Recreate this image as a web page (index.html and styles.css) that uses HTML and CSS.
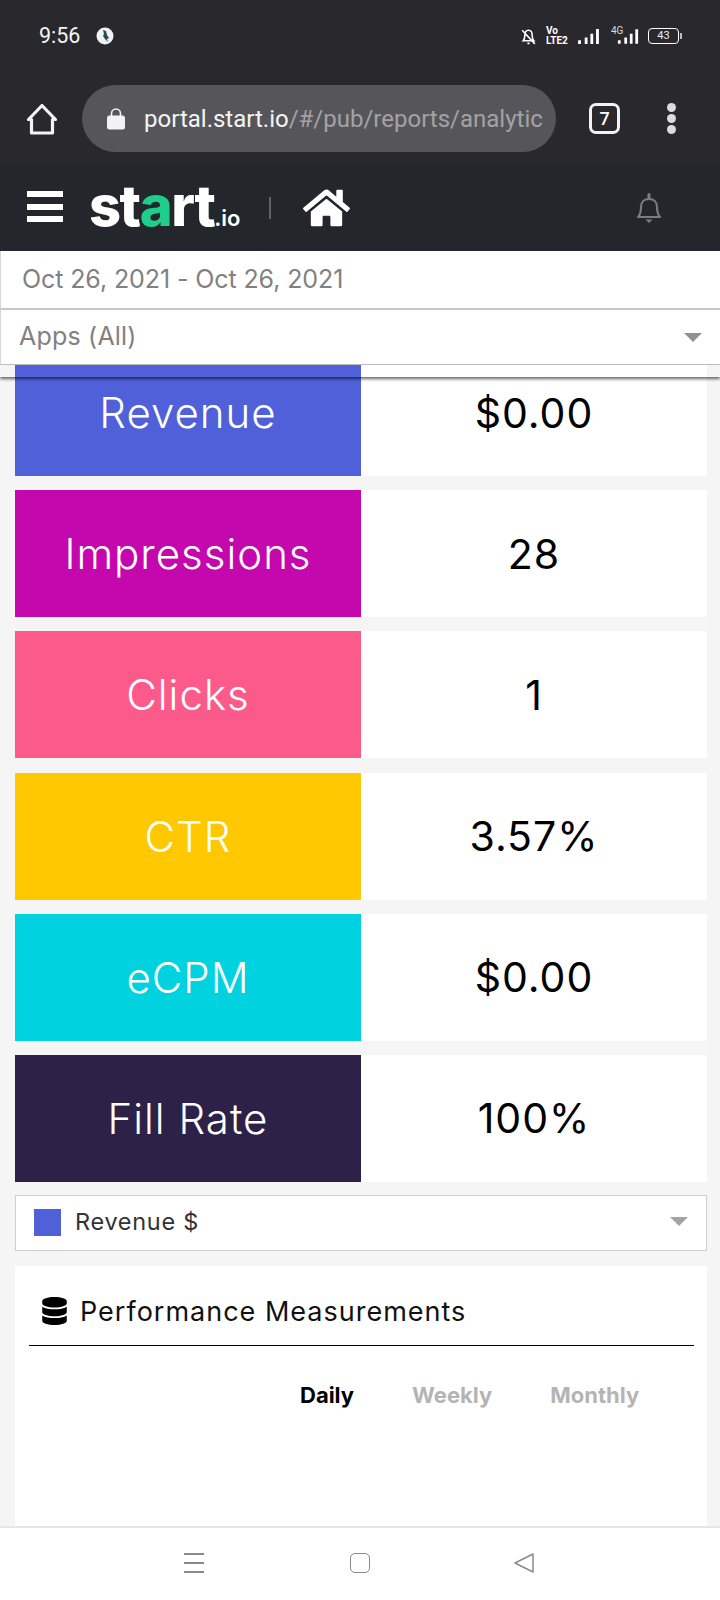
FILE: index.html
```html
<!DOCTYPE html>
<html lang="en">
<head>
<meta charset="utf-8">
<title>start.io analytics</title>
<link rel="stylesheet" href="styles.css">
</head>
<body>
<div class="screen">
  <div class="chrome">
    <div class="status">
      <div class="status-left">
        <span class="time">9:56</span>
        <svg class="globe" viewBox="0 0 18 18"><circle cx="9" cy="9" r="8.5" fill="#f2f2f2"/><path d="M7 3l3 1 1 4 2 3-2 1 1 3-3-3-2-3 1-2z" fill="#274a5c"/></svg>
      </div>
      <div class="status-right">
        <svg class="mute" viewBox="0 0 16 18"><path d="M3 13c1-1 1.500-2 1.500-5S6 3 8 3s3.500 2 3.500 5 .5 4 1.500 5zM7 15.500h2M2 3l12 13" fill="none" stroke="#fff" stroke-width="1.500"/></svg>
        <span class="volte"><span>Vo</span><span>LTE2</span></span>
        <svg class="signal" viewBox="0 0 24 18"><path d="M1 13h3v4H1zM8 10h3v7H8zM14 6h3v11h-3zM20 1h3v16h-3z" fill="#fff"/></svg>
        <span class="net"><span class="net-label">4G</span><svg class="signal-b" viewBox="0 0 24 18"><path d="M1 13h3v4H1zM8 10h3v7H8zM14 6h3v11h-3zM20 1h3v16h-3z" fill="#fff"/></svg></span>
        <span class="battery"><span class="battery-body">43</span><span class="battery-tip"></span></span>
      </div>
    </div>
    <div class="browser">
      <svg class="browser-home" viewBox="0 0 32 32"><path d="M16 2.500 2.500 16.500h3V30h21V16.500h3z" fill="none" stroke="#f4f4f4" stroke-width="3.200" stroke-linejoin="round"/></svg>
      <div class="url">
        <svg class="lock" viewBox="0 0 18 22"><path d="M4.500 8V5.500a4.500 4.500 0 0 1 9 0V8" fill="none" stroke="#f2f2f2" stroke-width="1.600"/><rect y="7.500" width="18" height="14" rx="2.500" fill="#f2f2f2"/></svg>
        <span class="url-text"><span class="url-host">portal.start.io</span>/#/pub/reports/analytic</span>
      </div>
      <span class="tabs">7</span>
      <span class="dots"><i></i><i></i><i></i></span>
    </div>
  </div>

  <header class="app-header">
    <span class="burger"><i></i><i></i><i></i></span>
    <span class="logo">st<span class="logo-a">a</span>rt<span class="logo-io">.io</span></span>
    <span class="divider"></span>
    <svg class="house" viewBox="0 0 576 512"><path fill="#fff" d="M280.37 148.26L96 300.11V464a16 16 0 0 0 16 16l112.06-.29a16 16 0 0 0 15.92-16V368a16 16 0 0 1 16-16h64a16 16 0 0 1 16 16v95.64a16 16 0 0 0 16 16.05L464 480a16 16 0 0 0 16-16V300L295.67 148.26a12.19 12.19 0 0 0-15.3 0zM571.6 251.47L488 182.56V44.05a12 12 0 0 0-12-12h-56a12 12 0 0 0-12 12v72.61L318.47 43a48 48 0 0 0-61 0L4.34 251.47a12 12 0 0 0-1.6 16.9l25.5 31A12 12 0 0 0 45.15 301l235.22-193.74a12.19 12.19 0 0 1 15.3 0L530.9 301a12 12 0 0 0 16.9-1.6l25.5-31a12 12 0 0 0-1.7-16.93z"/></svg>
    <svg class="bell" viewBox="0 0 26 30"><path d="M2 24c2-2 3-4 3-10 0-5 3.500-8 8-8s8 3 8 8c0 6 1 8 3 10z" fill="none" stroke="#7c7c7c" stroke-width="2.200" stroke-linejoin="round"/><path d="M13 1.500v4" stroke="#7c7c7c" stroke-width="3" stroke-linecap="round"/><path d="M9.500 26.500h7L13 30z" fill="#7c7c7c"/></svg>
  </header>

  <main class="content">
    <div class="filters">
      <div class="filter filter-date">Oct 26, 2021 - Oct 26, 2021</div>
      <div class="filter filter-apps">Apps (All)<span class="caret caret-apps"></span></div>
      <div class="filters-shade"></div>
    </div>

    <section class="stats">
      <div class="stat"><div class="stat-name c-revenue">Revenue</div><div class="stat-value">$0.00</div></div>
      <div class="stat"><div class="stat-name c-impressions">Impressions</div><div class="stat-value">28</div></div>
      <div class="stat"><div class="stat-name c-clicks">Clicks</div><div class="stat-value">1</div></div>
      <div class="stat"><div class="stat-name c-ctr">CTR</div><div class="stat-value">3.57%</div></div>
      <div class="stat"><div class="stat-name c-ecpm">eCPM</div><div class="stat-value">$0.00</div></div>
      <div class="stat"><div class="stat-name c-fill">Fill Rate</div><div class="stat-value">100%</div></div>
    </section>

    <div class="metric">
      <span class="swatch"></span>
      <span class="metric-label">Revenue $</span>
      <span class="caret caret-metric"></span>
    </div>

    <section class="perf">
      <h2 class="perf-title">
        <svg class="db" viewBox="0 0 448 512"><path fill="#000" d="M448 73.143v45.714C448 159.143 347.667 192 224 192S0 159.143 0 118.857V73.143C0 32.857 100.333 0 224 0s224 32.857 224 73.143zM448 176v102.857C448 319.143 347.667 352 224 352S0 319.143 0 278.857V176c48.125 33.143 136.208 48.572 224 48.572S399.875 209.143 448 176zm0 160v102.857C448 479.143 347.667 512 224 512S0 479.143 0 438.857V336c48.125 33.143 136.208 48.572 224 48.572S399.875 369.143 448 336z"/></svg>
        Performance Measurements
      </h2>
      <div class="periods">
        <span class="period active">Daily</span>
        <span class="period">Weekly</span>
        <span class="period">Monthly</span>
      </div>
    </section>
  </main>

  <nav class="navbar">
    <span class="nav-menu"><i></i><i></i><i></i></span>
    <span class="nav-home"></span>
    <svg class="nav-back" viewBox="0 0 20 20"><path d="M19 1v18L1 10z" fill="none" stroke="#8a8a8a" stroke-width="1.500" stroke-linejoin="round"/></svg>
  </nav>
</div>
</body>
</html>
```

FILE: styles.css
```css
* { box-sizing: border-box; }
html, body { margin: 0; padding: 0; }
body { font-family: "Inter", "Liberation Sans", sans-serif; background: #f5f5f5; }
.screen { width: 720px; height: 1600px; display: flex; flex-direction: column; overflow: hidden; }

/* phone + browser chrome */
.chrome { height: 165px; background: #28282d; flex: none; color: #fff; font-family: "Roboto", sans-serif; }
.status { height: 85px; display: flex; justify-content: space-between; align-items: flex-start; padding: 25px 38px 0 39px; }
.status-left { display: flex; align-items: center; gap: 16px; height: 22px; }
.time { font-size: 21.500px; line-height: 22px; color: #f4f4f4; }
.globe { width: 18px; height: 18px; }
.status-right { display: flex; align-items: center; height: 22px; gap: 9px; }
.mute { width: 17px; height: 19px; }
.volte { display: flex; flex-direction: column; font-size: 10px; line-height: 10px; font-weight: 700; width: 22px; }
.signal { width: 23px; height: 17px; }
.net { position: relative; display: block; width: 30px; height: 18px; }
.net-label { position: absolute; left: 2px; top: -2px; font-size: 10px; line-height: 12px; color: #ddd; }
.signal-b { position: absolute; right: 0; top: 1px; width: 22px; height: 17px; }
.battery { display: flex; align-items: center; }
.battery-body { width: 31px; height: 16px; border: 1.500px solid #fff; border-radius: 4px; font-size: 11px; line-height: 13px; text-align: center; color: #eee; }
.battery-tip { width: 2px; height: 6px; background: #bbb; margin-left: 1px; }

.browser { height: 67px; display: flex; align-items: center; padding-left: 26px; }
.browser-home { width: 32px; height: 32px; flex: none; }
.url { width: 474px; height: 67px; margin-left: 24px; border-radius: 34px; background: #56565a; display: flex; align-items: center; padding: 0 14px 0 25px; flex: none; }
.lock { width: 18px; height: 22px; flex: none; }
.url-text { margin-left: 19px; font-size: 24px; white-space: nowrap; color: #a3a3a5; }
.url-host { color: #f4f4f4; }
.tabs { width: 31px; height: 31px; margin-left: 33px; border: 3px solid #f2f2f2; border-radius: 7px; font-size: 18px; font-weight: 500; line-height: 25px; text-align: center; flex: none; }
.dots { margin-left: 47px; display: flex; flex-direction: column; gap: 2px; flex: none; }
.dots i { display: block; width: 9px; height: 9px; border-radius: 50%; background: #dcdcdc; }

/* app header */
.app-header { height: 86px; flex: none; background: #23262b; display: flex; align-items: center; padding-left: 27px; position: relative; }
.burger { display: flex; flex-direction: column; gap: 6.500px; width: 36px; margin-top: -3px; }
.burger i { display: block; height: 6px; background: #fff; }
.logo { margin: 8px 0 0 26px; width: 152px; font-family: "Inter", sans-serif; font-size: 56px; font-weight: 800; line-height: 60px; letter-spacing: -1.500px; color: #fff; white-space: nowrap; }
.logo-a { color: #1fce8a; }
.logo-io { font-size: 22px; font-weight: 600; letter-spacing: 0; }
.divider { width: 2px; height: 22px; background: #5f6266; margin-left: 28px; }
.house { width: 47px; height: 42px; margin-left: 32px; }
.bell { width: 26px; height: 30px; margin-left: 286px; }

/* content */
.content { flex: 1; position: relative; padding: 98px 13px 0 15px; overflow: hidden; }
.filters { position: absolute; top: 0; left: 0; right: 0; z-index: 2; background: transparent; }
.filter { background: #fff; border-left: 1px solid #d6d6d6; color: #818181; font-size: 25px; display: flex; align-items: center; position: relative; }
.filter-date { height: 59px; padding: 0 0 1px 21px; border-bottom: 2px solid #c8c8c8; letter-spacing: -.1px; }
.filter-apps { height: 55px; padding: 0 0 2px 18px; border-bottom: 1px solid #bdbdbd; letter-spacing: .2px; }
.filters-shade { height: 12px; box-shadow: 0 2px 3px rgba(0, 0, 0, .6); clip-path: inset(0 0 -8px 0); }
.caret { position: absolute; width: 0; height: 0; border-left: 9px solid transparent; border-right: 9px solid transparent; border-top: 9px solid #929292; }
.caret-apps { right: 18px; top: 23px; }
.caret-metric { right: 18px; top: 21px; border-top-color: #a3a3a3; }

.stats { display: flex; flex-direction: column; gap: 14.200px; }
.stat { display: grid; grid-template-columns: 346px 346px; height: 127px; }
.stat-name, .stat-value { display: flex; align-items: center; justify-content: center; font-size: 42px; font-weight: 300; letter-spacing: 1px; }
.stat-name { color: #fff; }
.stat-value { background: #fff; color: #000; font-size: 41px; font-weight: 400; letter-spacing: 1px; }
.c-revenue { background: #4f60d9; }
.c-impressions { background: #c507ae; }
.c-clicks { background: #fd5a8c; }
.c-ctr { background: #ffc800; }
.c-ecpm { background: #00d2df; }
.c-fill { background: #2d2148; }

.metric { position: relative; margin-top: 13px; width: 692px; height: 56px; background: #fff; border: 1px solid #cfcfcf; display: flex; align-items: center; padding-left: 18px; }
.swatch { width: 27px; height: 27px; background: #4f60d9; }
.metric-label { margin: 0 0 3px 14px; font-size: 23.500px; letter-spacing: .7px; color: #333; }

.perf { margin-top: 15px; width: 692px; height: 261px; background: #fff; padding: 0 13px 0 14px; }
.perf-title { margin: 0; height: 80px; border-bottom: 1px solid #000; display: flex; align-items: center; padding: 12px 0 0 13px; font-size: 27px; font-weight: 400; letter-spacing: 1px; color: #111; }
.db { width: 25px; height: 28px; margin-right: 13px; }
.periods { display: flex; padding: 35px 0 0 271px; }
.period { font-size: 22px; font-weight: 700; line-height: 28px; color: #b4b4b4; margin-right: 58px; }
.period.active { color: #000; }

/* nav bar */
.navbar { height: 74px; flex: none; background: #fff; border-top: 2px solid #e6e6e6; display: flex; align-items: center; padding: 0 0 3px 184px; }
.nav-menu { display: flex; flex-direction: column; gap: 7px; width: 20px; }
.nav-menu i { display: block; height: 2px; background: #8a8a8a; }
.nav-home { width: 20px; height: 20px; border: 1.500px solid #8a8a8a; border-radius: 5px; margin-left: 146px; }
.nav-back { width: 20px; height: 20px; margin-left: 144px; }
```
